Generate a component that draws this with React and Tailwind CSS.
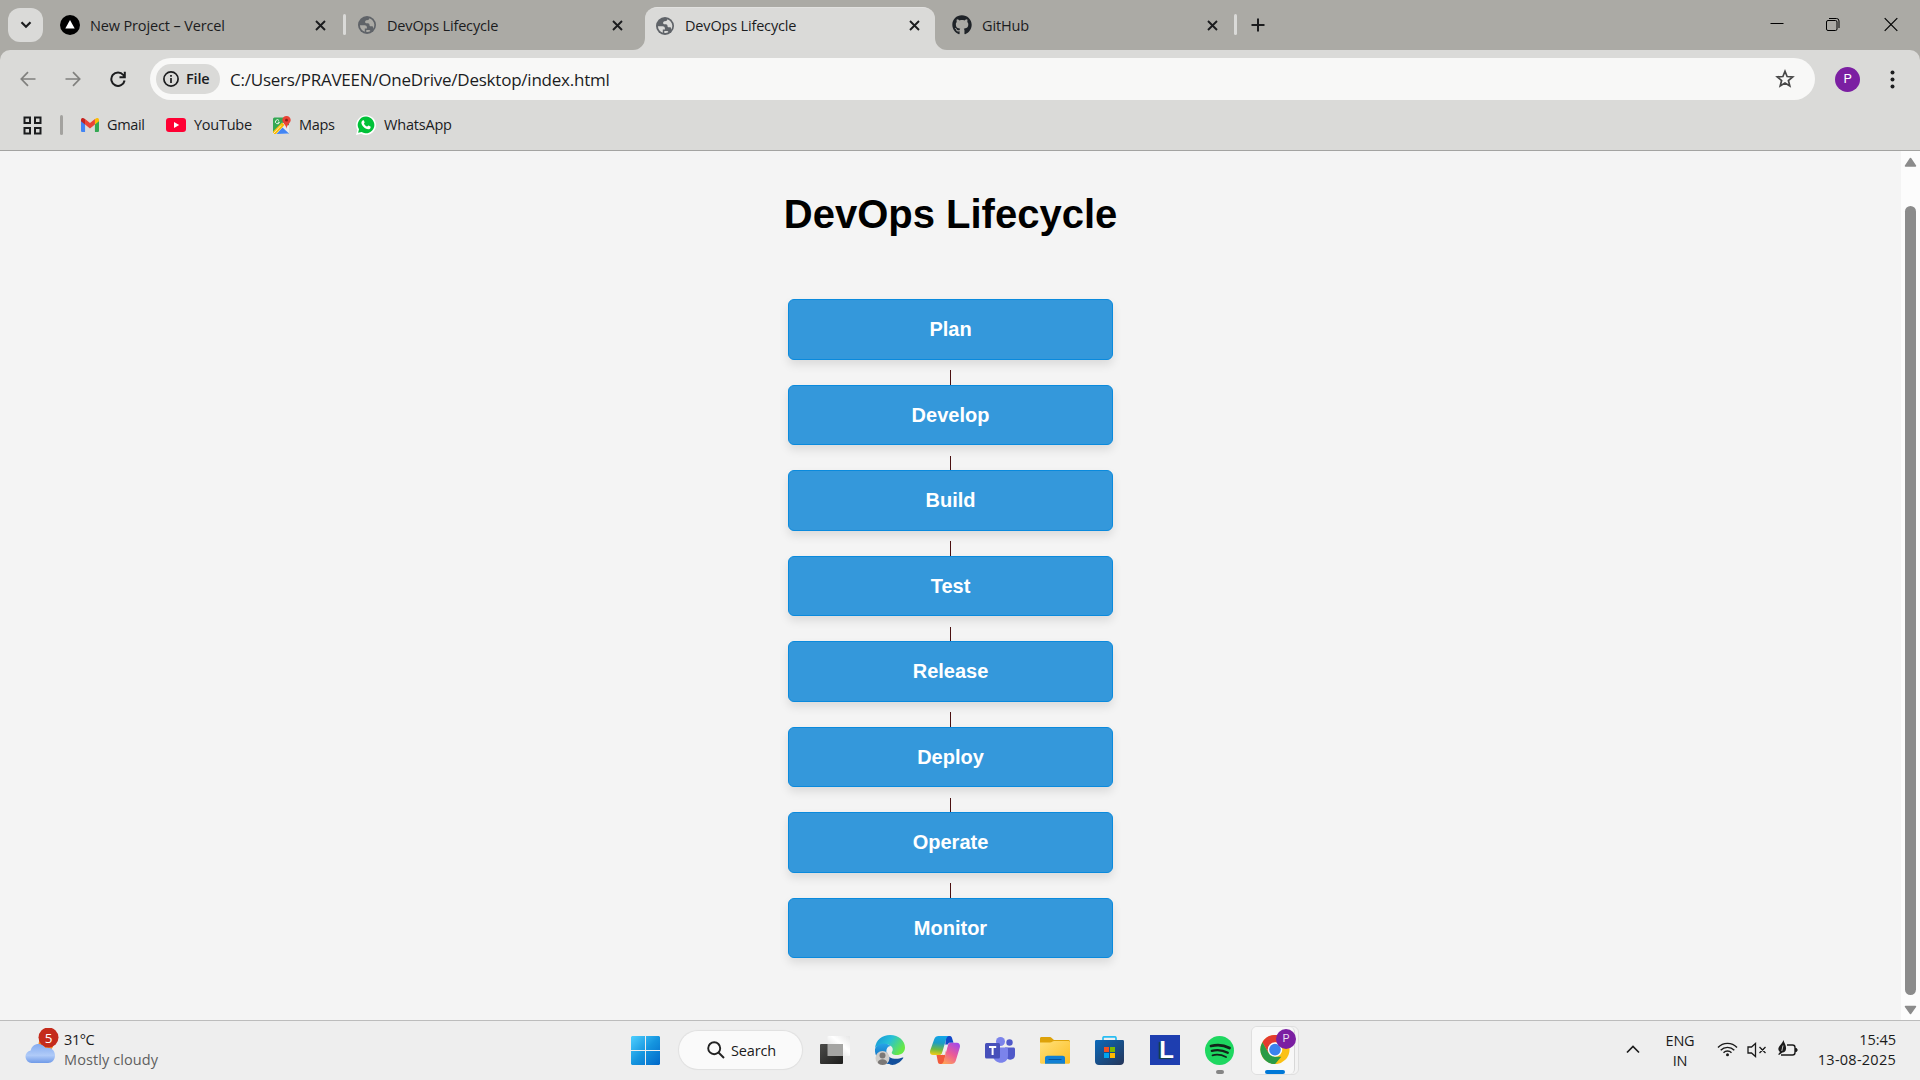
import React from "react";
import { FaGithub } from "react-icons/fa";

const ui = "font-['Open_Sans','Noto_Sans',sans-serif]";

function Close() {
  return (
    <svg width="11" height="11" viewBox="0 0 11 11" stroke="#1b1c1e" strokeWidth="1.9">
      <path d="M1 1l9 9M10 1l-9 9" />
    </svg>
  );
}

function Globe({ hole }) {
  return (
    <svg width="18" height="18" viewBox="0 0 18 18">
      <circle cx="9" cy="9" r="9" fill="#5f6368" />
      <path
        d="M1.900 9.300h4.700c1.400 0 2.300.8 2.300 2v1.100H6.800v3.300C3.900 14.900 2.100 12.400 1.900 9.300zM11.300 2.300c-.1 1.500-1 1.900-2.300 1.900-1.200 0-1.900.7-1.900 1.600 0 1 .7 1.500 1.700 1.500h1.100c1.100 0 1.600.8 1.600 1.700 0 .8.5 1.300 1.300 1.300h1.100c.8 0 1.100.5 1.100 1.200v1.200c1-1.200 1.400-2.600 1.300-4.100-.2-2.900-2.100-5.400-5-6.300zM8.300 14h2.900c.6 0 1 .3 1.200.9-.9.700-2.400 1.300-4.100 1.200z"
        fill={hole}
      />
    </svg>
  );
}

function Vercel() {
  return (
    <svg width="20" height="20" viewBox="0 0 20 20">
      <circle cx="10" cy="10" r="10" fill="#000" />
      <path d="M10 5l4.700 8.500H5.300z" fill="#fff" />
    </svg>
  );
}

function Tab({ icon, title, active, spacing }) {
  return (
    <div
      className={
        active
          ? "relative flex h-[43px] w-[290px] shrink-0 items-center rounded-t-[12px] border-t border-[#e2e2e0] bg-[#dadad8] pb-[7px] pl-[10px] pr-[15px]"
          : "flex h-[36px] shrink-0 items-center"
      }
    >
      <span className="flex w-[20px] shrink-0 justify-center">{icon}</span>
      <span className={"ml-[10px] flex-1 whitespace-nowrap pt-[1px] text-[14.5px] leading-5 text-[#1b1c1e] " + spacing}>{title}</span>
      <Close />
      {active && (
        <>
          <svg className="absolute -left-[12px] bottom-0" width="12" height="12"><path d="M12 0v12H0A12 12 0 0 0 12 0z" fill="#dadad8" /></svg>
          <svg className="absolute -right-[12px] bottom-0" width="12" height="12"><path d="M0 0v12h12A12 12 0 0 1 0 0z" fill="#dadad8" /></svg>
        </>
      )}
    </div>
  );
}

function TabStrip() {
  return (
    <div className="flex h-[50px] bg-[#abaaa5]">
      <div className="ml-[8px] mt-[8px] flex h-[34px] w-[35px] items-center justify-center rounded-[12px] bg-[#dadad8]">
        <svg width="12" height="8" viewBox="0 0 12 8" fill="none" stroke="#1b1c1e" strokeWidth="2.200"><path d="M1.500 1.200L6 5.700l4.500-4.500" /></svg>
      </div>
      <div className="ml-[17px] mt-[7px] w-[266px]"><Tab icon={<Vercel />} title="New Project – Vercel" spacing="tracking-[-0.14px]" /></div>
      <div className="ml-[17px] mt-[14px] h-[21px] w-[3px] rounded bg-[#dadad8]" />
      <div className="ml-[11px] mt-[7px] w-[266px]"><Tab icon={<Globe hole="#abaaa5" />} title="DevOps Lifecycle" spacing="tracking-[-0.17px]" /></div>
      <div className="ml-[22px] mt-[7px]"><Tab active icon={<Globe hole="#dadad8" />} title="DevOps Lifecycle" spacing="tracking-[-0.17px]" /></div>
      <div className="ml-[17px] mt-[7px] w-[266px]"><Tab icon={<FaGithub size={20} color="#1f2328" />} title="GitHub" spacing="tracking-[-0.15px]" /></div>
      <div className="ml-[16px] mt-[14px] h-[21px] w-[3px] rounded bg-[#dadad8]" />
      <svg className="ml-[14px] mt-[18px]" width="14" height="14" viewBox="0 0 14 14" stroke="#1b1c1e" strokeWidth="2"><path d="M7 0.500v13M0.500 7h13" /></svg>
      <div className="ml-auto mr-[22px] mt-[17px] flex h-[15px] text-black">
        <svg width="14" height="15" stroke="currentColor"><path d="M0.500 6.500h13" /></svg>
        <svg className="ml-[42px]" width="14" height="15" viewBox="0 0 14 15" fill="none" stroke="currentColor"><rect x=".5" y="3.500" width="10.500" height="10" rx="1.500" /><path d="M3 1.500h7.500a2.500 2.500 0 0 1 2.500 2.500v7" /></svg>
        <svg className="ml-[44px]" width="14" height="15" viewBox="0 0 14 15" stroke="currentColor" strokeWidth="1.200"><path d="M.7 1.200l12.600 12.600M13.300 1.200L.7 13.800" /></svg>
      </div>
    </div>
  );
}

function Toolbar() {
  return (
    <div className="flex h-[58px] items-center">
      <svg className="ml-[20px]" width="16" height="16" viewBox="0 0 16 16" fill="none" stroke="#80807e" strokeWidth="1.700"><path d="M15.500 8H1.500M8 1.200L1.300 8 8 14.800" /></svg>
      <svg className="ml-[29px]" width="16" height="16" viewBox="0 0 16 16" fill="none" stroke="#80807e" strokeWidth="1.700"><path d="M.5 8h14M8 1.200L14.700 8 8 14.800" /></svg>
      <svg className="ml-[29px]" width="16" height="16" viewBox="0 0 16 16" fill="none" stroke="#1b1c1e" strokeWidth="2"><path d="M14.600 9.500A6.700 6.700 0 1 1 13.300 4L14.500 5.500M14.800 .8v5.500H9.500" /></svg>
      <div className="ml-[24px] flex h-[42px] w-[1665px] items-center rounded-full bg-[#f8f8f7] pl-[6px]">
        <div className="flex h-[30px] w-[64px] items-center rounded-full bg-[#dadad8] pl-[7px]">
          <svg width="16" height="16" viewBox="0 0 16 16" fill="none" stroke="#1b1c1e" strokeWidth="1.700"><circle cx="8" cy="8" r="7.100" /><path d="M8 7v5M8 4v1.700" /></svg>
          <span className="ml-[7px] text-[14.5px] font-semibold tracking-[-0.15px] text-[#1b1c1e]">File</span>
        </div>
        <span className="ml-[10px] whitespace-nowrap pt-[1px] text-[17px] tracking-[-0.23px] text-[#1b1c1e]">C:/Users/PRAVEEN/OneDrive/Desktop/index.html</span>
        <svg className="ml-auto mr-[20px]" width="20" height="20" viewBox="0 0 20 20" fill="none" stroke="#474747" strokeWidth="1.700"><path d="M10 2.300l2.100 5.200 5.600.4-4.300 3.600 1.400 5.500L10 14l-4.800 3 1.400-5.500L2.300 7.900l5.600-.4z" /></svg>
      </div>
      <div className="ml-[20px] flex size-[25px] items-center justify-center rounded-full bg-[#7b1fa2] font-[Roboto,sans-serif] text-[13px] text-white">P</div>
      <svg className="ml-[30px]" width="5" height="19" fill="#1b1c1e"><circle cx="2.500" cy="2.500" r="2" /><circle cx="2.500" cy="9.500" r="2" /><circle cx="2.500" cy="16.500" r="2" /></svg>
    </div>
  );
}

function Bookmarks() {
  const label = "whitespace-nowrap text-[14.5px]";
  return (
    <div className="flex h-[42px] items-center pb-[8px] text-[#1b1c1e]">
      <svg className="ml-[23px]" width="19" height="19" viewBox="0 0 19 19" fill="none" stroke="#1b1c1e" strokeWidth="2"><path d="M1.500 1.500h5.500V7H1.500zM12 1.500h5.500V7H12zM1.500 12h5.500v5.500H1.500zM12 12h5.500v5.500H12z" /></svg>
      <div className="ml-[18px] h-[20px] w-[3px] rounded bg-[#a3a29f]" />
      <svg className="ml-[18px]" width="18" height="14" viewBox="0 0 19 14" preserveAspectRatio="none"><path d="M0 2v10.700C0 13.400.6 14 1.300 14h3V6z" fill="#4285f4" /><path d="M14.700 6v8h3c.7 0 1.300-.6 1.300-1.300V2z" fill="#34a853" /><path d="M14.700 1v5.500L19 3.300V2c0-2-2-2.500-3.200-1.600z" fill="#fbbc04" /><path d="M4.300 6.500V1l5.200 4 5.200-4v5.500l-5.200 4z" fill="#ea4335" /><path d="M0 2v1.300l4.300 3.200V1L3.200.4C2-.5 0 0 0 2z" fill="#c5221f" /></svg>
      <span className={label + " ml-[8px] w-[38px] tracking-[-0.33px]"}>Gmail</span>
      <svg className="ml-[21px]" width="20" height="14" viewBox="0 0 20 14"><rect width="20" height="14" rx="3" fill="#f03" /><path d="M8 4l5.200 3L8 10z" fill="#fff" /></svg>
      <span className={label + " ml-[8px] w-[57px] tracking-[-0.25px]"}>YouTube</span>
      <svg className="ml-[22px]" width="18" height="19" viewBox="0 0 18 19"><rect y="1.500" width="16" height="16.500" rx="1.500" fill="#34a853" /><path d="M0 16.500L10 6.500l6 3v7a1.500 1.500 0 0 1-1.500 1.500H2z" fill="#e8eaed" /><path d="M3.500 18l6-6.500L16 17.500z" fill="#4285f4" /><path d="M0 15.500L9 6.500l2.500 2.500L3 18H1.500A1.500 1.500 0 0 1 0 16.500z" fill="#fbbc04" /><path d="M0 18l8-8.500" stroke="#f5f5f5" strokeWidth=".8" /><path d="M13.500 0C11 0 9.300 1.900 9.300 4.100c0 3 3.400 4 4.200 8.600.8-4.600 4.200-5.600 4.200-8.600C17.700 1.900 16 0 13.500 0z" fill="#ea4335" /><circle cx="13.500" cy="4.200" r="1.400" fill="#8c1f16" /><path d="M6 4.500a2 2 0 1 0 .4 1.700H4.800" stroke="#fff" strokeWidth=".9" fill="none" /></svg>
      <span className={label + " ml-[8px] w-[37px] tracking-[-0.3px]"}>Maps</span>
      <svg className="ml-[20px]" width="20" height="20" viewBox="0 0 20 20"><path d="M0 20l1.400-5.100A9.900 9.900 0 1 1 5.200 18.700z" fill="#fff" /><path d="M10 1.600a8.300 8.300 0 0 0-7 12.700l-.9 3.500 3.500-.9A8.300 8.300 0 1 0 10 1.600z" fill="#00c138" /><path d="M6.900 5.300c.5-.2.8-.1 1 .3l.7 1.600c.2.500-.7 1.200-.6 1.500.8 1.400 1.800 2.300 3.200 2.900.4.100 1-1.200 1.400-1l1.800.9c.5.200.3 1.600-.5 2.200-1.800 1.400-5-.4-6.500-2-1.700-1.700-3.200-4.900-.5-6.400z" fill="#fff" /></svg>
      <span className={label + " ml-[8px] tracking-[-0.2px]"}>WhatsApp</span>
    </div>
  );
}

const stages = ["Plan", "Develop", "Build", "Test", "Release", "Deploy", "Operate", "Monitor"];

function Page() {
  return (
    <div className="flex h-[869px] bg-[#f4f4f4] font-['Liberation_Sans',Arial,sans-serif]">
      <main className="flex w-[1901px] flex-col items-center">
        <h1 className="mt-[40px] h-[46px] text-[40px] font-bold leading-[46px] text-black">DevOps Lifecycle</h1>
        <div className="mt-[62px] flex w-[325px] flex-col">
          {stages.map((s, i) => (
            <React.Fragment key={s}>
              {i > 0 && <div className="flex h-[25px] items-end justify-center"><span className="h-[14.500px] w-px bg-[#4b1010]" /></div>}
              <div className="flex h-[60.500px] items-center justify-center rounded-[6px] border border-[#0a8add] bg-[#3498db] text-[20px] font-bold text-white shadow-[0_5px_10px_rgba(0,0,0,0.1)]">{s}</div>
            </React.Fragment>
          ))}
        </div>
      </main>
      <div className="flex w-[19px] flex-col items-center bg-[#fcfcfc]">
        <svg className="mt-[6px]" width="13" height="10"><path d="M6.500 1.500l5 7.500h-10z" fill="#8b8b8b" stroke="#8b8b8b" strokeLinejoin="round" strokeWidth="1.500" /></svg>
        <div className="mt-[39px] h-[789px] w-[11px] rounded-full bg-[#8b8b8b]" />
        <svg className="mt-[10px]" width="13" height="10"><path d="M6.500 8.500l5-7h-10z" fill="#8b8b8b" stroke="#8b8b8b" strokeLinejoin="round" strokeWidth="1.500" /></svg>
      </div>
    </div>
  );
}

function WeatherIcon() {
  return (
    <svg width="36" height="38" viewBox="0 0 36 38">
      <defs><linearGradient id="cl" x1="0" y1="0" x2="0" y2="1"><stop offset="0" stopColor="#84abf0" /><stop offset=".6" stopColor="#b0cbf8" /><stop offset="1" stopColor="#6f9ae8" /></linearGradient></defs>
      <circle cx="22" cy="16" r="7.500" fill="#f58220" />
      <path d="M7.500 35a6.300 6.300 0 0 1-.8-12.500C7.500 18.500 10.500 16 14.500 16c3 0 5.500 1.500 7 4 5-1.500 9.500 2 9.500 7.500 0 4.500-3 7.500-7 7.500z" fill="url(#cl)" />
      <circle cx="24.500" cy="9.500" r="10" fill="#c42b1c" />
      <text x="24.500" y="14.500" textAnchor="middle" fontSize="13.500" fill="#fff" fontFamily="Open Sans">5</text>
    </svg>
  );
}

function Start() {
  return (
    <svg width="29" height="29" viewBox="0 0 29 29">
      <defs><linearGradient id="wn" gradientUnits="userSpaceOnUse" x1="0" y1="0" x2="29" y2="29"><stop stopColor="#4fd0ff" /><stop offset=".5" stopColor="#1595df" /><stop offset="1" stopColor="#0067c8" /></linearGradient></defs>
      <path d="M1 0h13v14H0V1zM15 0h13l1 1v13H15zM0 15h14v14H1l-1-1zM15 15h14v13l-1 1H15z" fill="url(#wn)" />
    </svg>
  );
}

function TaskView() {
  return (
    <svg width="30" height="28" viewBox="0 0 30 28">
      <defs><linearGradient id="tv" x1="0" y1="0" x2="1" y2="1"><stop stopColor="#4b4b49" /><stop offset="1" stopColor="#1d1d1c" /></linearGradient><linearGradient id="tw" x1="0" y1="1" x2="1" y2="0"><stop stopColor="#d6d6d6" /><stop offset=".6" stopColor="#fff" /><stop offset="1" stopColor="#e6e6e6" /></linearGradient></defs>
      <rect x="7.500" width="22.500" height="20" rx="1" fill="url(#tw)" />
      <rect y="8" width="23" height="20" rx="1" fill="url(#tv)" />
      <path d="M7.500 8H23v12H7.500z" fill="#a5a5a3" />
    </svg>
  );
}

function Edge() {
  return (
    <svg width="30" height="30" viewBox="0 0 30 30">
      <defs><linearGradient id="eg" x1="0" y1="0" x2="1" y2=".5"><stop stopColor="#1590d8" /><stop offset=".5" stopColor="#27c0d8" /><stop offset="1" stopColor="#67e845" /></linearGradient><linearGradient id="eb" x1="0" y1="0" x2="0" y2="1"><stop stopColor="#27a4e8" /><stop offset="1" stopColor="#0d5bb0" /></linearGradient></defs>
      <path d="M0 13C1 5 7 0 15 0c9 0 15 6 15 12.500 0 5-4 7.500-8.500 7.500-3.500 0-5.500-1.500-4.500-3 1.200-2 1-4-.5-5.500C12 7 3 9 0 13z" fill="url(#eg)" />
      <path d="M0 14c2-5.500 10-7.500 15.500-3-4 .5-5 5-3.500 9 1.500 4 5 6.500 9 7-10 6-22-2-21-13z" fill="url(#eb)" />
      <path d="M12 17c0 6.500 9 8.500 15.500 5.500 1-.4 1 .3.500 1C25 28 19 31 15 29.500 11 26.500 10.500 21 12 17z" fill="#124f9c" />
      <circle cx="7.500" cy="23" r="7" fill="#cfcdca" /><circle cx="7.500" cy="20.500" r="3" fill="#7b7876" /><path d="M2.800 28c0-5 9.400-5 9.400 0-2 2.500-7 2.500-9.400 0z" fill="#7b7876" />
    </svg>
  );
}

function Copilot() {
  return (
    <svg width="30" height="28" viewBox="0 0 30 28">
      <defs>
        <linearGradient id="ca" x1="0.300" y1="0" x2="0.200" y2="1"><stop stopColor="#12a5e8" /><stop offset=".35" stopColor="#1c9cc5" /><stop offset=".7" stopColor="#70b93f" /><stop offset="1" stopColor="#f5cc16" /></linearGradient>
        <linearGradient id="cb" x1="0.800" y1="0" x2="0.200" y2="1"><stop stopColor="#a449e8" /><stop offset=".5" stopColor="#ec5b96" /><stop offset="1" stopColor="#ffa457" /></linearGradient>
      </defs>
      <path d="M16 0h4c1.300 0 1.700 1 2 2l1.500 4.700H19L15 12z" fill="#1248c9" />
      <path d="M14 28H10c-1.300 0-1.800-1-2.100-2L6.500 19H12l4-5z" fill="#f15a3a" />
      <path d="M8.500 0H19c-1.500 0-2.300 1.500-2.700 2.700L12 17c-.4 1.400-1.500 2-3 2H3C.5 19-.4 17 .2 14.500L4.300 3C5 1 6.500 0 8.500 0z" fill="url(#ca)" />
      <path d="M21.500 28H11c1.500 0 2.300-1.500 2.700-2.700L18 9c.5-1.400 1.500-2.200 3-2.200h6c2.500 0 3.400 2 2.800 4.700L25.700 25c-.7 2-2.200 3-4.200 3z" fill="url(#cb)" />
      <path d="M15.300 8.500h2.500L14.700 19h-2.600z" fill="#eeeeee" />
    </svg>
  );
}

function Teams() {
  return (
    <svg width="30" height="27" viewBox="0 0 30 27">
      <circle cx="24.500" cy="5.500" r="3.200" fill="#5059c9" /><path d="M20 10.500h8.500c.8 0 1.500.7 1.500 1.500v6c0 6-8 6-10 1z" fill="#5059c9" />
      <circle cx="15.500" cy="4.500" r="4.500" fill="#7b83eb" /><path d="M9 10.500h12.500c.8 0 1.500.6 1.500 1.500v7c0 9-14 9-15 0z" fill="#7b83eb" />
      <rect y="6" width="15" height="15.500" rx="1.500" fill="#4750ba" />
      <path d="M4 10h7.200M7.600 10v8" stroke="#fff" strokeWidth="2" />
    </svg>
  );
}

function Folder() {
  return (
    <svg width="30" height="27" viewBox="0 0 30 27">
      <defs><linearGradient id="fo" x1="0" y1="0" x2="1" y2="1"><stop stopColor="#ffe07a" /><stop offset="1" stopColor="#fdbf24" /></linearGradient></defs>
      <path d="M0 1.500C0 .6.6 0 1.500 0h8c1 0 1.500.4 2.200 1L14 3h14.500c.9 0 1.500.6 1.500 1.500V8H0z" fill="#dda20a" />
      <path d="M0 5.500h10c1 0 1.800-.3 2.500-.9L14 4h14.500c.9 0 1.500.6 1.500 1.500v20c0 .7-.5 1.200-1.200 1.200H1.200c-.7 0-1.200-.5-1.200-1.200z" fill="url(#fo)" />
      <path d="M5 26.700V21c0-1.500 1-2.300 2.500-2.300h15c1.500 0 2.500.8 2.500 2.300v5.700z" fill="#1180d4" /><path d="M8.500 22.500h13" stroke="#07549c" />
    </svg>
  );
}

function Store() {
  return (
    <svg width="29" height="29" viewBox="0 0 29 29">
      <defs><linearGradient id="st" x1="0" y1="0" x2="1" y2="1"><stop stopColor="#0b69ba" /><stop offset="1" stopColor="#253558" /></linearGradient></defs>
      <path d="M8 5V2c0-.8.400-1.200 1.200-1.200h10.600c.8 0 1.200.4 1.200 1.200v3" fill="none" stroke="#29bdf2" strokeWidth="1.700" />
      <path d="M0 5.500C0 4.500.500 4 1.500 4h26c1 0 1.500.500 1.500 1.500V25c0 2.500-1.500 4-4 4H4c-2.500 0-4-1.500-4-4z" fill="url(#st)" />
      <path d="M9 11h5v5H9z" fill="#f25022" /><path d="M15 11h5v5h-5z" fill="#7fba00" /><path d="M9 17h5v5H9z" fill="#00a4ef" /><path d="M15 17h5v5h-5z" fill="#ffb900" />
    </svg>
  );
}

function Spotify() {
  return (
    <svg width="29" height="29" viewBox="0 0 29 29" fill="none" stroke="#13241a" strokeLinecap="round">
      <circle cx="14.500" cy="14.500" r="14.500" fill="#1ed760" stroke="none" />
      <path d="M6 10c6-1.600 13-1 18.500 2" strokeWidth="2.800" /><path d="M6.800 14.800c5.500-1.400 11-.8 16 1.900" strokeWidth="2.300" /><path d="M7.500 19.300c4.700-1.200 9-.6 13.500 1.700" strokeWidth="1.800" />
    </svg>
  );
}

function ChromeIcon() {
  return (
    <svg width="30" height="30" viewBox="0 0 30 30">
      <circle cx="15" cy="15" r="15" fill="#fbc116" />
      <path d="M2 7.500A15 15 0 0 1 28 7.500H15L8.500 18.750z" fill="#e33b2e" />
      <path d="M2 7.500l6.500 11.250L15 22.500h6.500L15 30A15 15 0 0 1 2 7.500z" fill="#2a9b46" />
      <circle cx="15" cy="15" r="7.500" fill="#fff" /><circle cx="15" cy="15" r="6" fill="#3b82ee" />
    </svg>
  );
}

function Taskbar() {
  return (
    <div className="flex h-[60px] justify-between border-t border-[#bcbcbc] bg-[#eeeeee] text-[#1b1b1b]">
      <div className="flex w-[631px] pl-[24px] pt-[7px]">
        <WeatherIcon />
        <div className="ml-[4px] mt-[2px] text-[14.5px] leading-[20px]">
          <div className="tracking-[-0.4px]">31°C</div>
          <div className="tracking-[0.1px] text-[#5f5f5f]">Mostly cloudy</div>
        </div>
      </div>
      <div className="flex w-[670px] pt-[10px]">
        <span className="mt-[5px]"><Start /></span>
        <div className="ml-[19px] flex h-[38px] w-[123px] items-center rounded-full bg-[#fafafa] pl-[28px] shadow-[0_0_1px_1px_rgba(0,0,0,0.06)]">
          <svg width="18" height="18" viewBox="0 0 18 18" fill="none" stroke="#222" strokeWidth="1.900"><circle cx="7.200" cy="7.200" r="6" /><path d="M11.500 11.500l5.500 5.500" /></svg>
          <span className="ml-[6px] pt-[1px] text-[14.5px] tracking-[-0.15px]">Search</span>
        </div>
        <span className="ml-[18px] mt-[5px]"><TaskView /></span>
        <span className="ml-[25px] mt-[4px]"><Edge /></span>
        <span className="ml-[25px] mt-[5px]"><Copilot /></span>
        <span className="ml-[25px] mt-[6px]"><Teams /></span>
        <span className="ml-[25px] mt-[6px]"><Folder /></span>
        <span className="ml-[25px] mt-[5px]"><Store /></span>
        <div className="ml-[26px] mt-[4px] flex size-[30px] items-center justify-center bg-[#1e3eb0] pl-[3px] font-['Liberation_Sans'] text-[24px] font-bold leading-none text-white [text-shadow:-2px_1px_1px_#14403f]">L</div>
        <div className="ml-[25px] mt-[5px] flex w-[29px] flex-col items-center"><Spotify /><span className="mt-[5px] h-[4px] w-[8px] rounded-full bg-[#858585]" /></div>
        <div className="-mt-[5px] ml-[17px] flex h-[49px] w-[48px] rounded-[6px] border border-[#dfdfdf] bg-[#f3f3f3]">
          <div className="relative flex w-[43px] flex-col items-center rounded-[5px] border-r border-[#d8d8d8] bg-[#f8f8f8] pl-[4px] pt-[8px]">
            <ChromeIcon />
            <span className="mt-[6px] h-[4px] w-[20px] rounded-full bg-[#0078d7]" />
            <span className="absolute -right-[2px] top-[2px] flex size-[20px] items-center justify-center rounded-full bg-[#7b1fa2] font-[Roboto,sans-serif] text-[11px] text-[#eadcf0]">P</span>
          </div>
        </div>
      </div>
      <div className="flex w-[619px] justify-end pr-[24px]">
        <svg className="mt-[24px]" width="14" height="9" viewBox="0 0 14 9" fill="none" stroke="#1b1b1b" strokeWidth="1.700"><path d="M1 7.500l6-6 6 6" /></svg>
        <div className="ml-[24px] mt-[10px] w-[32px] text-center text-[14.500px] leading-[20px] tracking-[-0.2px]"><div>ENG</div><div>IN</div></div>
        <svg className="ml-[21px] mt-[20px]" width="21" height="16" viewBox="0 0 21 16" fill="none" stroke="#1b1b1b" strokeWidth="1.400"><path d="M1 6.500a13 13 0 0 1 19 0M3.700 9.200a9.500 9.500 0 0 1 13.600 0M6.500 11.700a5.700 5.700 0 0 1 8 0" /><circle cx="10.500" cy="13.700" r="1.500" fill="#1b1b1b" stroke="none" /></svg>
        <svg className="ml-[9px] mt-[21px]" width="20" height="16" viewBox="0 0 20 16" fill="none" stroke="#1b1b1b" strokeWidth="1.300"><path d="M1 5h3.500l4-3.500v13l-4-3.500H1zM12.500 5l6 6M18.500 5l-6 6" /></svg>
        <svg className="ml-[10px] mt-[19px]" width="21" height="18" viewBox="0 0 21 18"><path d="M10 5h5.500A2.500 2.500 0 0 1 18 7.500v5a2.500 2.500 0 0 1-2.500 2.500H4" fill="none" stroke="#1b1b1b" strokeWidth="1.400" /><path d="M18 8h1.500l1 1.500v1l-1 1.500H18z" fill="#1b1b1b" /><path d="M6.500 0C7 3 9.500 5 9 9c-.2 2-1.500 3.500-3.500 3.500L2 15l-.8-.8L3 12C-1.500 7.500 4.500 5.500 6.500 0z" fill="#1b1b1b" /><path d="M6 5.500L4.800 11" stroke="#eee" strokeWidth=".8" /></svg>
        <div className="ml-[18px] mt-[9px] w-[80px] whitespace-nowrap text-right text-[14.5px] leading-[20px]"><div className="tracking-[-0.05px]">15:45</div><div className="tracking-[0.25px]">13-08-2025</div></div>
      </div>
    </div>
  );
}

export default function App() {
  return (
    <div className={"h-[1080px] w-[1920px] overflow-hidden bg-[#f4f4f4] " + ui}>
      <TabStrip />
      <div className="bg-[#abaaa5]">
        <div className="h-[101px] rounded-t-[10px] border-b border-[#a3a3a1] bg-[#dadad8]">
          <Toolbar />
          <Bookmarks />
        </div>
      </div>
      <Page />
      <Taskbar />
    </div>
  );
}
